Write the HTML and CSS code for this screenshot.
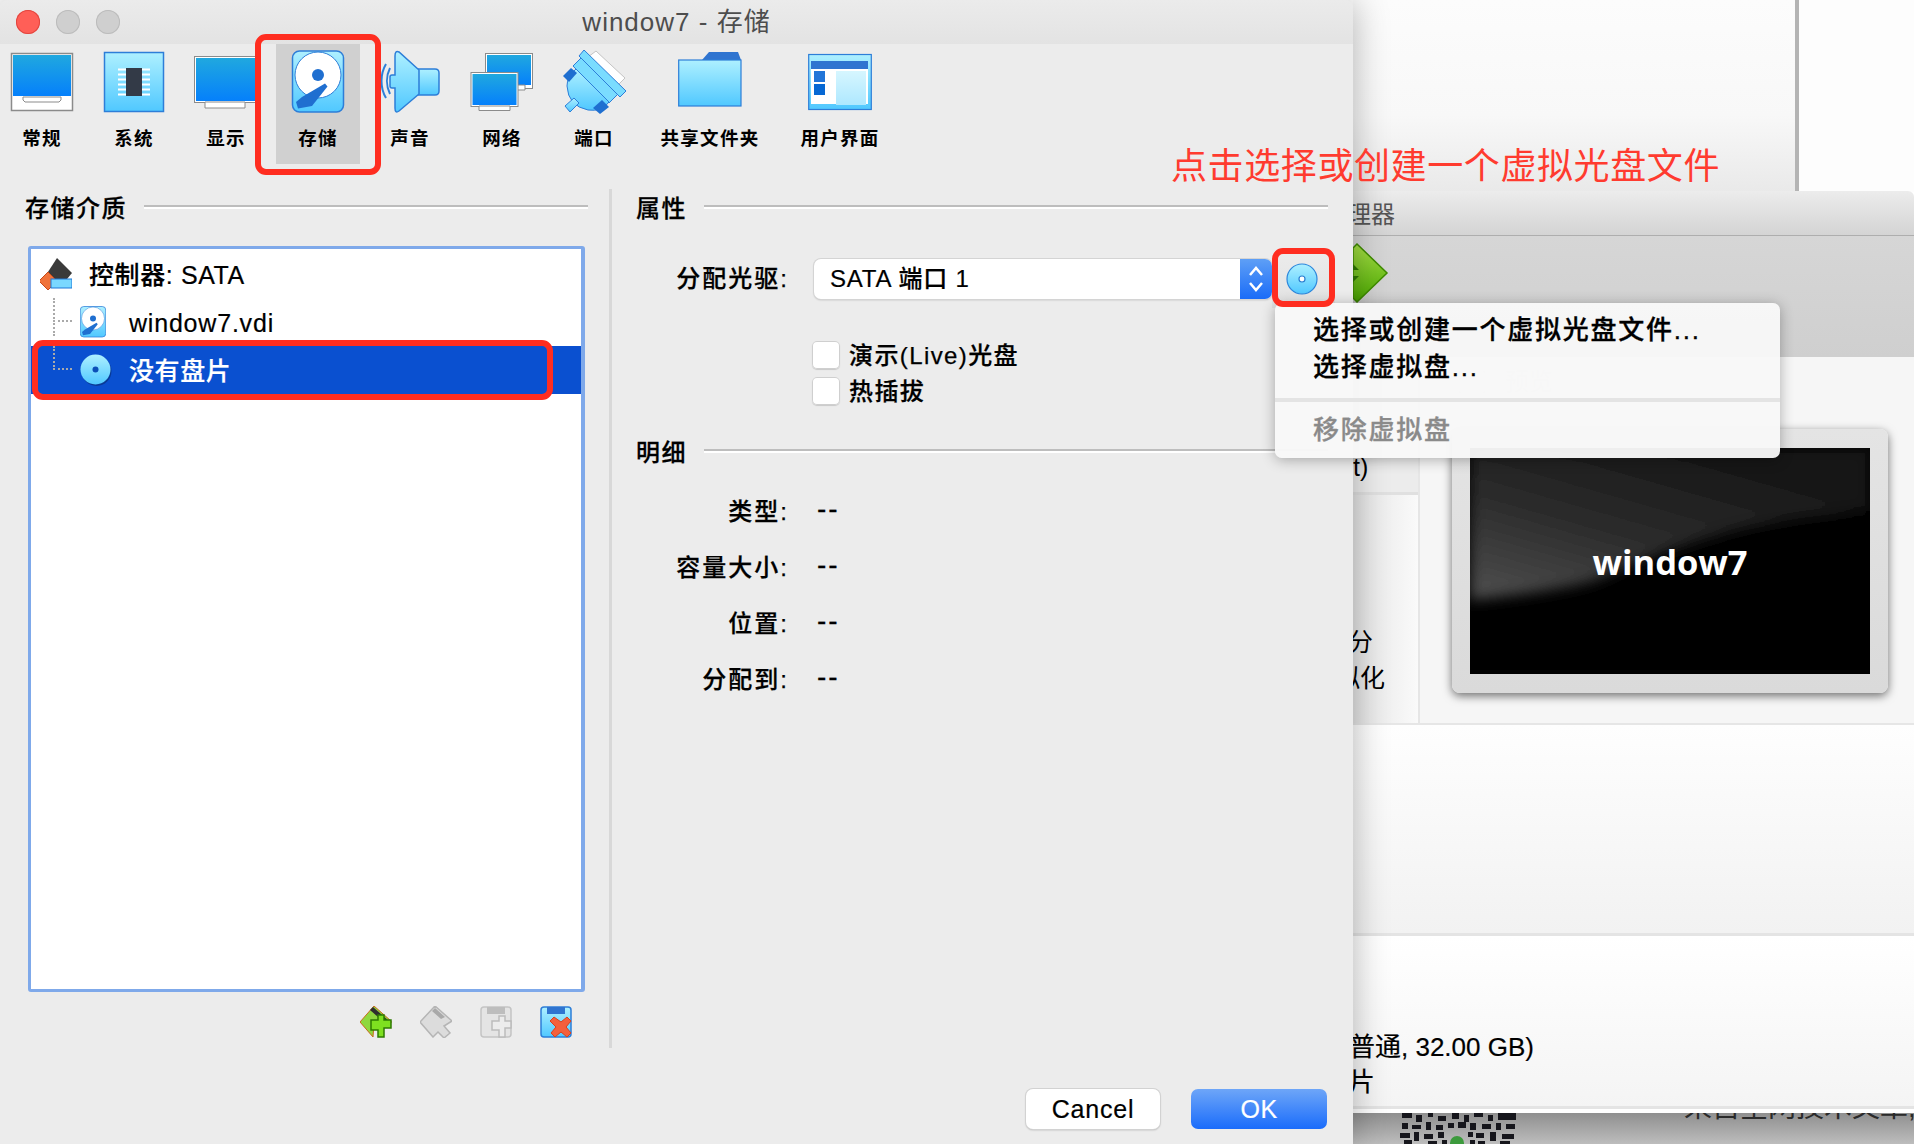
FILE: index.html
```html
<!DOCTYPE html>
<html lang="zh">
<head>
<meta charset="utf-8">
<title>window7 - 存储</title>
<link rel="stylesheet" href="styles.css">
</head>
<body>
<svg class="defs" aria-hidden="true">
  <defs>
    <linearGradient id="screen" x1="0" y1="0" x2="0" y2="1"><stop offset="0" stop-color="#20a8df"/><stop offset="1" stop-color="#0580fb"/></linearGradient>
    <linearGradient id="tile" x1="0" y1="0" x2="0" y2="1"><stop offset="0" stop-color="#aef0ff"/><stop offset="1" stop-color="#50c8ff"/></linearGradient>
    <linearGradient id="pane" x1="0" y1="0" x2="0" y2="1"><stop offset="0" stop-color="#d6f6ff"/><stop offset="1" stop-color="#aee8ff"/></linearGradient>
    <linearGradient id="green" x1="0" y1="0" x2="0" y2="1"><stop offset="0" stop-color="#a6e045"/><stop offset="1" stop-color="#4aa800"/></linearGradient>
    <linearGradient id="glow" x1="0" y1="1" x2="0.75" y2="0"><stop offset="0" stop-color="#505050"/><stop offset="0.45" stop-color="#2c2c2c"/><stop offset="1" stop-color="#121212"/></linearGradient>
    <filter id="soft"><feGaussianBlur stdDeviation="7"/></filter>
    <filter id="qrblur"><feGaussianBlur stdDeviation="0.7"/></filter>
    <symbol id="disk" viewBox="0 0 64 64">
      <rect x="6.500" y="1" width="51" height="61" rx="7" fill="url(#tile)" stroke="#2d7ed8" stroke-width="1.500"/>
      <circle cx="32" cy="25" r="23" fill="#fff" stroke="#2d7ed8" stroke-width="1"/>
      <circle cx="32" cy="25" r="6" fill="#1f6fd0"/>
      <path d="M39 33.500L41.500 36.500L26 56L12 58.500L10 52L16 47Z" fill="#1f6fd0"/>
    </symbol>
  </defs>
</svg>

<div class="page-behind">
  <div class="page-text">来自全网技术文章,</div>
  <svg class="qr" viewBox="0 0 118 31" width="118" height="31">
    <g filter="url(#qrblur)" fill="#15181a">
      <path d="M2 0h10v5H2zM16 2h6v7h-6zM28 0h5v4h-5zM38 3h8v5h-8zM52 0h7v6h-7zM64 2h5v7h-5zM74 0h9v4h-9zM88 2h5v6h-5zM98 0h18v7H98zM2 10h6v6H2zM12 12h9v4h-9zM26 9h5v8h-5zM36 12h7v5h-7zM48 10h6v5h-6zM58 9h8v6h-8zM70 10h6v7h-6zM82 11h9v5h-9zM96 10h5v7h-5zM106 11h9v5h-9zM0 20h10v5H0zM14 19h5v9h-5zM24 21h9v5h-9zM38 19h6v6h-6zM68 19h5v5h-5zM76 20h8v5h-8zM90 19h6v9h-6zM102 21h12v5h-12zM4 27h8v4H4zM28 28h9v3h-9zM42 27h5v4h-5zM70 27h5v4h-5zM78 28h7v3h-7zM100 28h10v3h-10z"/>
    </g>
    <circle cx="57" cy="30" r="7" fill="#3c9a3c"/>
  </svg>
</div>

<div class="window-top">
  <div class="window-top-main"></div>
  <div class="window-top-side"></div>
</div>

<section class="manager">
  <header class="manager-title"><span>理器</span></header>
  <div class="manager-tools">
    <svg class="start-arrow" viewBox="0 0 36 60" width="36" height="60">
      <path d="M4 1L34 30L4 59L0 55V5Z" fill="url(#green)" stroke="#3f8c00" stroke-width="1.500"/>
      <path d="M0 21L6 27L0 27ZM0 33L6 33L0 39Z" fill="#2f7a00"/>
    </svg>
  </div>
  <div class="manager-summary">
    <div class="summary-side">
      <div class="side-cell side-cell-top"><span>t)</span></div>
      <div class="side-cell side-cell-bottom">
        <span class="side-line side-line-a">分</span>
        <span class="side-line side-line-b">拟化</span>
      </div>
    </div>
    <div class="preview">
      <div class="preview-head">
        <svg viewBox="0 0 28 28" width="28" height="28"><rect x="1" y="3" width="26" height="22" rx="2" fill="none" stroke="#e6e6e6" stroke-width="1.500"/></svg>
        <span>预览</span>
      </div>
      <div class="preview-frame">
        <div class="preview-screen">
          <svg class="preview-glow" viewBox="0 0 400 226" preserveAspectRatio="none">
            <path d="M0 0H400V62C300 72 236 82 126 132C90 142 40 148 0 152Z" fill="url(#glow)" filter="url(#soft)"/>
          </svg>
          <span class="preview-name">window7</span>
        </div>
      </div>
    </div>
  </div>
  <div class="manager-band"></div>
  <div class="manager-storage">
    <div class="storage-line">普通, 32.00 GB)</div>
    <div class="storage-line">片</div>
  </div>
</section>

<main class="settings">
  <header class="titlebar">
    <div class="lights">
      <span class="light light-close"></span>
      <span class="light"></span>
      <span class="light"></span>
    </div>
    <h1 class="title">window7 - 存储</h1>
  </header>

  <nav class="toolbar">
    <div class="tool">
      <svg viewBox="0 0 64 64" width="64" height="64">
        <rect x="1.500" y="3.500" width="61" height="57" fill="#fff" stroke="#8b8b8b" stroke-width="1.500"/>
        <rect x="3" y="5" width="58" height="41" fill="url(#screen)"/>
        <path d="M13 47H51V50L49 52H15L13 50Z" fill="#fff" stroke="#8b8b8b" stroke-width="1"/>
      </svg>
      <span>常规</span>
    </div>
    <div class="tool">
      <svg viewBox="0 0 64 64" width="64" height="64">
        <rect x="2.500" y="2.500" width="59" height="59" fill="url(#tile)" stroke="#2d7ed8" stroke-width="1.500"/>
        <path d="M16 19.500H48M16 24.500H48M16 29.500H48M16 34.500H48M16 39.500H48M16 44.500H48" stroke="#fff" stroke-width="2"/>
        <rect x="24" y="18" width="16" height="28" fill="#333a47"/>
      </svg>
      <span>系统</span>
    </div>
    <div class="tool">
      <svg viewBox="0 0 64 64" width="64" height="64">
        <rect x="0.500" y="6.500" width="63" height="46" fill="#fff" stroke="#8b8b8b" stroke-width="1"/>
        <rect x="2" y="8" width="60" height="43" fill="url(#screen)"/>
        <path d="M11 52H51V58H11Z" fill="#fff" stroke="#8b8b8b" stroke-width="1"/>
      </svg>
      <span>显示</span>
    </div>
    <div class="tool tool-active">
      <svg viewBox="0 0 64 64" width="64" height="64"><use href="#disk"/></svg>
      <span>存储</span>
    </div>
    <div class="tool">
      <svg viewBox="0 0 64 64" width="64" height="64">
        <path d="M8 14C2 24 2 38 8 48M12 18C8 26 8 36 12 44" fill="none" stroke="#2d7ed8" stroke-width="2"/>
        <path d="M40 19H57Q61 19 61 23V41Q61 45 57 45H40Z" fill="url(#tile)" stroke="#2d7ed8" stroke-width="1.500"/>
        <path d="M14 25H17V6Q17 0 21 2L41 20V44L21 61Q17 64 17 58V38H14Q12 38 12 36V27Q12 25 14 25Z" fill="url(#tile)" stroke="#2d7ed8" stroke-width="1.500"/>
      </svg>
      <span>声音</span>
    </div>
    <div class="tool">
      <svg viewBox="0 0 64 64" width="64" height="64">
        <rect x="15.500" y="3.500" width="47" height="35" fill="#fff" stroke="#8b8b8b" stroke-width="1"/>
        <rect x="17" y="5" width="44" height="30" fill="url(#screen)"/>
        <path d="M46 35H55V40H46Z" fill="#fff" stroke="#8b8b8b" stroke-width="1"/>
        <rect x="1" y="22.500" width="47" height="34" fill="#fff" stroke="#8b8b8b" stroke-width="1"/>
        <rect x="2.500" y="24" width="44" height="31" fill="url(#screen)"/>
        <path d="M9 56H40V60.500H9Z" fill="#fff" stroke="#8b8b8b" stroke-width="1"/>
      </svg>
      <span>网络</span>
    </div>
    <div class="tool">
      <svg viewBox="0 0 64 64" width="64" height="64">
        <path d="M26 7L34 1L63 28L55 36Z" fill="#fff" stroke="#c4c4c4" stroke-width="1"/>
        <path d="M11 16L19 8L49 38L56 44L47 53Z" fill="#7adcff" stroke="#2d7ed8" stroke-width="1"/>
        <path d="M14 19L47 52Q40 62 26 60Q6 56 5 36Q5 26 14 19Z" fill="url(#tile)" stroke="#2d7ed8" stroke-width="1"/>
        <path d="M1 26L9 18L15 23L7 32Z" fill="#1f6fd0"/>
        <path d="M31 58L40 50L47 57L38 64Z" fill="#1f6fd0"/>
        <path d="M22 0L64 41L58 47L17 6Z" fill="#7adcff" stroke="#2d7ed8" stroke-width="1"/>
        <path d="M3 56L12 48L17 53L8 62Z" fill="url(#tile)" stroke="#2d7ed8" stroke-width="1"/>
      </svg>
      <span>端口</span>
    </div>
    <div class="tool tool-wide">
      <svg viewBox="0 0 64 64" width="64" height="64">
        <path d="M24 10L31 2H60L63 10Z" fill="#2f74d0"/>
        <rect x="0.700" y="10" width="62.300" height="46" fill="url(#tile)" stroke="#2d7ed8" stroke-width="1.200"/>
      </svg>
      <span>共享文件夹</span>
    </div>
    <div class="tool tool-mid">
      <svg viewBox="0 0 64 64" width="64" height="64">
        <rect x="0.700" y="4.500" width="62.600" height="55" fill="url(#tile)" stroke="#2d7ed8" stroke-width="1.200"/>
        <rect x="3" y="11" width="57" height="43" fill="#fff"/>
        <rect x="3" y="11" width="57" height="8" fill="#2f74d0"/>
        <rect x="6" y="21" width="11" height="11" fill="#2175d8"/>
        <rect x="6" y="34" width="11" height="11" fill="#0668d4"/>
        <rect x="28" y="21" width="30" height="34" fill="url(#pane)"/>
      </svg>
      <span>用户界面</span>
    </div>
  </nav>

  <div class="panes">
    <section class="pane pane-left">
      <div class="head"><h2>存储介质</h2><span class="rule"></span></div>
      <div class="tree">
        <div class="row row-root">
          <svg class="row-icon" viewBox="0 0 32 32" width="32" height="32">
            <path d="M17 0L32 15L27 21H9L6 17Z" fill="#3a3a3a"/>
            <path d="M8 14L17 23L8 32L-1 23Z" fill="#f0733a" stroke="#c84a18" stroke-width="1"/>
            <rect x="11" y="21" width="21" height="9" fill="#7ad8ff" stroke="#1f78d8" stroke-width="1"/>
          </svg>
          <span class="row-text">控制器: SATA</span>
        </div>
        <div class="row row-child">
          <span class="branch branch-more"></span>
          <svg class="row-icon row-icon-narrow" viewBox="6 0 52 64" width="26" height="32"><use href="#disk" width="64" height="64"/></svg>
          <span class="row-text row-text-latin">window7.vdi</span>
        </div>
        <div class="row row-child row-selected">
          <span class="branch"></span>
          <svg class="row-icon" viewBox="0 0 32 32" width="32" height="32">
            <circle cx="16.500" cy="17" r="15" fill="#0a3a96"/>
            <circle cx="15.500" cy="15.500" r="15" fill="url(#tile)"/>
            <circle cx="15.500" cy="15.500" r="3" fill="#0b4fb8"/>
          </svg>
          <span class="row-text">没有盘片</span>
        </div>
      </div>
      <div class="tree-tools">
        <svg viewBox="0 0 32 32" width="32" height="32">
          <path d="M14 0L31 15V17H14L13 31L0 16Z" fill="#8ed83e" stroke="#c86a1c" stroke-width="1"/>
          <path d="M13 1L30 16L26 18L10 4Z" fill="#2e2e2e"/>
          <path d="M11 14H18V9H24V14H31V22H24V31H18V24H11Z" fill="#7ee020" stroke="#2e7a00" stroke-width="1.500"/>
        </svg>
        <svg viewBox="0 0 32 32" width="32" height="32">
          <path d="M15 0L32 15L24 20L30 27L24 32L18 26L13 31L0 16Z" fill="#dcdcdc" stroke="#b5b5b5" stroke-width="1.500"/>
          <path d="M15 2L25 11L21 13L12 5Z" fill="#a9a9a9"/>
        </svg>
        <svg viewBox="0 0 32 32" width="32" height="32">
          <rect x="1" y="1" width="30" height="30" rx="3" fill="#e4e4e4" stroke="#c4c4c4" stroke-width="1.500"/>
          <rect x="7" y="1" width="18" height="7" fill="#bdbdbd"/>
          <path d="M12 15H19V10H25V15H31V22H25V31H19V24H12Z" fill="#ececec" stroke="#bcbcbc" stroke-width="1.500"/>
        </svg>
        <svg viewBox="0 0 32 32" width="32" height="32">
          <rect x="1" y="1" width="30" height="30" rx="3" fill="url(#tile)" stroke="#2d7ed8" stroke-width="1.500"/>
          <rect x="7" y="1" width="18" height="7" fill="#2f74d0"/>
          <path d="M14 11L21 16L27 11L31 15L26 21L31 27L27 31L21 26L15 31L11 27L16 21L10 15Z" fill="#f4603c" stroke="#d8401c" stroke-width="1"/>
        </svg>
      </div>
    </section>

    <section class="pane pane-right">
      <div class="head"><h2>属性</h2><span class="rule"></span></div>
      <div class="field">
        <label class="field-label">分配光驱:</label>
        <div class="drive">
          <div class="combo">
            <span class="combo-value">SATA 端口 1</span>
            <span class="combo-stepper">
              <svg viewBox="0 0 16 30" width="16" height="30"><path d="M2 11L8 4L14 11M2 19L8 26L14 19" fill="none" stroke="#fff" stroke-width="2.500"/></svg>
            </span>
          </div>
          <div class="disc-button">
            <svg viewBox="0 0 32 32" width="32" height="32">
              <circle cx="16" cy="16" r="15" fill="url(#tile)" stroke="#2b86dc" stroke-width="1.200"/>
              <circle cx="16" cy="16" r="3" fill="#fff" stroke="#2b7ed0" stroke-width="1.200"/>
            </svg>
          </div>
        </div>
      </div>
      <div class="checks">
        <div class="check"><span class="box"></span><span class="check-text">演示(Live)光盘</span></div>
        <div class="check"><span class="box"></span><span class="check-text">热插拔</span></div>
      </div>
      <div class="head head-details"><h2>明细</h2><span class="rule"></span></div>
      <dl class="details">
        <dt>类型:</dt><dd>--</dd>
        <dt>容量大小:</dt><dd>--</dd>
        <dt>位置:</dt><dd>--</dd>
        <dt>分配到:</dt><dd>--</dd>
      </dl>
    </section>
  </div>

  <footer class="footer">
    <button class="btn btn-cancel">Cancel</button>
    <button class="btn btn-ok">OK</button>
  </footer>
</main>

<div class="menu">
  <div class="menu-item">选择或创建一个虚拟光盘文件...</div>
  <div class="menu-item">选择虚拟盘...</div>
  <div class="menu-sep"></div>
  <div class="menu-item menu-item-off">移除虚拟盘</div>
</div>

<div class="callout callout-tool"></div>
<div class="callout callout-row"></div>
<div class="callout callout-disc"></div>
<div class="note">点击选择或创建一个虚拟光盘文件</div>
</body>
</html>
```

FILE: styles.css
```css
* { box-sizing: border-box; }

html, body { margin: 0; padding: 0; }

body {
  position: relative;
  width: 1914px;
  height: 1144px;
  overflow: hidden;
  background: #fff;
  color: #000;
  font-family: "Liberation Sans", "Noto Sans CJK SC", sans-serif;
}

.defs { position: absolute; width: 0; height: 0; }

svg { display: block; }

/* ---------- windows behind ---------- */
.page-behind {
  position: absolute;
  left: 1353px;
  top: 1113px;
  width: 561px;
  height: 31px;
  overflow: hidden;
  background: linear-gradient(180deg, #8f8f8f 0, #bdbdbd 100%);
}
.page-text {
  position: absolute;
  left: 331px;
  top: -20px;
  width: 240px;
  font-size: 28px;
  line-height: 30px;
  white-space: nowrap;
  color: #2a2a2a;
}
.qr { position: absolute; left: 47px; top: 0; }

.window-top {
  position: absolute;
  left: 1353px;
  top: 0;
  width: 561px;
  height: 192px;
  display: flex;
}
.window-top-main {
  width: 446px;
  border-right: 4px solid #b4b4b4;
  background: linear-gradient(180deg, #fcfcfc 0, #f8f8f8 60%, #e9e9e9 100%);
}
.window-top-side { flex: 1; background: #fdfdfd; }

.manager {
  position: absolute;
  left: 1353px;
  top: 191px;
  width: 561px;
  height: 922px;
  display: flex;
  flex-direction: column;
  background: #fff;
  border-top-right-radius: 6px;
  overflow: hidden;
}
.manager-title {
  height: 45px;
  flex: none;
  padding-top: 9px;
  font-size: 24px;
  line-height: 30px;
  color: #555;
  background: linear-gradient(180deg, #ececec 0, #d4d4d4 100%);
  border-bottom: 1px solid #aeaeae;
}
.manager-title span { display: block; margin-left: -6px; white-space: nowrap; }
.manager-tools {
  height: 121px;
  flex: none;
  padding-top: 7px;
  background: linear-gradient(180deg, #d6d6d6 0, #cfcfcf 100%);
}
.manager-summary {
  height: 368px;
  flex: none;
  display: flex;
  background: #f6f6f6;
  border-bottom: 2px solid #e6e6e6;
}
.summary-side {
  width: 67px;
  flex: none;
  display: flex;
  flex-direction: column;
  border-right: 2px solid #e6e6e6;
}
.side-cell { font-size: 25px; line-height: 36px; }
.side-cell-top {
  height: 138px;
  padding-top: 92px;
  border-bottom: 3px solid #e0e0e0;
  background: #ececec;
}
.side-cell-bottom {
  flex: 1;
  padding-top: 129px;
  display: flex;
  flex-direction: column;
  background: linear-gradient(90deg, #e4e4e4 0, #fafafa 100%);
}
.side-line { white-space: nowrap; }
.side-line-a { margin-left: -5px; }
.side-line-b { margin-left: -18px; }
.preview { flex: 1; padding: 0 26px 0 32px; position: relative; }
.preview-head {
  height: 72px;
  display: flex;
  align-items: flex-start;
  gap: 19px;
  padding-top: 11px;
  padding-left: 6px;
  font-size: 24px;
  line-height: 28px;
  color: #e0e0e0;
}
.preview-frame {
  height: 264px;
  padding: 19px 18px;
  background: linear-gradient(180deg, #e4e4e4 0, #dadada 100%);
  border-radius: 8px;
  box-shadow: 0 3px 10px rgba(0, 0, 0, 0.55);
}
.preview-screen {
  position: relative;
  height: 226px;
  background: #000;
  overflow: hidden;
  display: flex;
  align-items: center;
  justify-content: center;
}
.preview-glow { position: absolute; left: 0; top: 0; width: 100%; height: 100%; }
.preview-name {
  position: relative;
  font-family: "Open Sans", "Noto Sans", sans-serif;
  font-weight: 700;
  font-size: 34.500px;
  color: #fff;
}
.manager-band {
  height: 211px;
  flex: none;
  background: linear-gradient(180deg, #fefefe 0, #f2f2f2 100%);
  border-bottom: 3px solid #e4e4e4;
}
.manager-storage {
  flex: 1;
  padding-top: 94px;
  font-size: 26px;
  line-height: 35px;
  background: linear-gradient(180deg, #fff 0, #f4f4f4 100%);
  border-bottom: 4px solid #fff;
  box-shadow: inset 0 -3px 0 #e4e4e4;
}
.storage-line { margin-left: -4px; white-space: nowrap; -webkit-text-stroke: 0.2px #000; }

/* ---------- settings window ---------- */
.settings {
  position: absolute;
  left: 0;
  top: 0;
  width: 1353px;
  height: 1144px;
  display: flex;
  flex-direction: column;
  background: #ececec;
  border-top-left-radius: 8px;
  border-top-right-radius: 8px;
  box-shadow: 0 0 36px rgba(0, 0, 0, 0.3);
}
.titlebar {
  height: 44px;
  flex: none;
  display: grid;
  grid-template-columns: 1fr auto 1fr;
  align-items: center;
  background: linear-gradient(180deg, #ebebeb 0, #e3e3e3 100%);
  border-top-left-radius: 8px;
  border-top-right-radius: 8px;
}
.lights { display: flex; gap: 16px; padding-left: 16px; }
.light {
  width: 24px;
  height: 24px;
  border-radius: 50%;
  background: #cfcfcf;
  box-shadow: inset 0 0 0 1px #bcbcbc;
}
.light-close { background: #ff5f57; box-shadow: inset 0 0 0 1px #e2463f; }
.title {
  margin: 0;
  font-size: 26px;
  font-weight: 400;
  line-height: 30px;
  letter-spacing: 1px;
  color: #4d4d4d;
}
.toolbar {
  height: 120px;
  flex: none;
  display: flex;
  gap: 8px;
}
.tool {
  width: 84px;
  flex: none;
  padding-top: 6px;
  display: flex;
  flex-direction: column;
  align-items: center;
  font-size: 18.500px;
  font-weight: 700;
  line-height: 24px;
  letter-spacing: 1.300px;
}
.tool span { margin-top: 13px; }
.tool-active { background: #d0d0d0; }
.tool-wide { width: 132px; }
.tool-mid { width: 112px; }

.panes {
  height: 859px;
  flex: none;
  margin-top: 25px;
  display: flex;
}
.pane-left {
  width: 612px;
  flex: none;
  padding: 0 21px 0 25px;
  border-right: 3px solid #d8d8d8;
}
.pane-right { flex: 1; min-width: 0; padding: 0 25px 0 24px; }

.head { height: 40px; display: flex; align-items: center; gap: 17px; }
.head h2 {
  margin: 0;
  font-size: 24px;
  font-weight: 500;
  line-height: 40px;
  letter-spacing: 1.500px;
  white-space: nowrap;
  -webkit-text-stroke: 0.25px #000;
}
.rule {
  flex: 1;
  height: 4px;
  margin-top: -4px;
  background: linear-gradient(180deg, #bdbdbd 0, #bdbdbd 50%, #fff 50%, #fff 100%);
}

.tree {
  width: 557px;
  height: 746px;
  margin: 17px 0 0 3px;
  padding-top: 1px;
  background: #fff;
  border: 3px solid #7fa9ea;
  border-right-width: 4px;
  border-radius: 3px;
  font-size: 25px;
  font-weight: 500;
  letter-spacing: 0.6px;
}
.row {
  height: 48px;
  display: flex;
  align-items: center;
  gap: 17px;
  white-space: nowrap;
}
.row-text { margin-top: -2px; -webkit-text-stroke: 0.2px currentColor; }
.row-text-latin { margin-top: 2px; letter-spacing: 0.8px; }
.row-root { padding-left: 9px; }
.row-child { padding-left: 22px; }
.row-icon { flex: none; }
.row-icon-narrow { margin-right: 6px; }
.branch {
  position: relative;
  width: 19px;
  height: 24px;
  margin-right: -9px;
  align-self: flex-start;
  flex: none;
  border-left: 2px dotted #aaa;
  border-bottom: 2px dotted #aaa;
}
.branch-more::after {
  content: "";
  position: absolute;
  left: -2px;
  top: 100%;
  height: 16px;
  border-left: 2px dotted #aaa;
}
.row-selected { background: #0a50d0; color: #fff; }

.tree-tools {
  display: flex;
  justify-content: flex-end;
  gap: 28px;
  margin: 14px 16px 0 0;
}

.field {
  display: grid;
  grid-template-columns: 151px minmax(0, 1fr);
  column-gap: 27px;
  align-items: center;
  margin-top: 20px;
}
.field-label, .details dt {
  font-size: 24px;
  font-weight: 500;
  letter-spacing: 2px;
  text-align: right;
  white-space: nowrap;
  margin: 0 -2px 0 0;
  padding-bottom: 4px;
  -webkit-text-stroke: 0.25px #000;
}
.drive { display: flex; align-items: center; }
.combo {
  width: 458px;
  height: 40px;
  flex: none;
  display: flex;
  align-items: center;
  justify-content: space-between;
  padding-left: 16px;
  background: #fff;
  border-radius: 7px;
  box-shadow: 0 0 0 1px #d4d4d4, 0 1px 2px rgba(0, 0, 0, 0.25);
  overflow: hidden;
  font-size: 24px;
  font-weight: 500;
  letter-spacing: 0.8px;
}
.combo-value { padding-bottom: 4px; -webkit-text-stroke: 0.2px #000; }
.combo-stepper {
  width: 32px;
  height: 40px;
  flex: none;
  display: flex;
  align-items: center;
  justify-content: center;
  background: linear-gradient(180deg, #5e9ff6 0, #1a6cf8 100%);
}
.disc-button {
  width: 63px;
  height: 59px;
  flex: none;
  display: flex;
  align-items: center;
  justify-content: center;
  padding-right: 3px;
  background: linear-gradient(180deg, #ececec 0, #e2e2e2 100%);
}

.checks { margin: 33px 0 0 176px; display: flex; flex-direction: column; gap: 8px; }
.check {
  height: 28px;
  display: flex;
  align-items: center;
  gap: 9px;
  font-size: 24px;
  font-weight: 500;
  letter-spacing: 1.400px;
  white-space: nowrap;
  -webkit-text-stroke: 0.25px #000;
}
.check-text { padding-bottom: 4px; }
.box {
  width: 28px;
  height: 28px;
  flex: none;
  background: #fff;
  border-radius: 5px;
  box-shadow: inset 0 0 0 1px #cfcfcf, 0 1px 1px rgba(0, 0, 0, 0.15);
}
.head-details { margin-top: 28px; }
.details {
  display: grid;
  grid-template-columns: 151px 1fr;
  grid-auto-rows: 56px;
  column-gap: 30px;
  align-items: center;
  margin: 10px 0 0;
}
.details dd {
  margin: 0;
  padding-bottom: 4px;
  font-size: 28px;
  font-weight: 500;
  letter-spacing: 2px;
  -webkit-text-stroke: 0.25px #000;
}

.footer {
  flex: 1;
  display: flex;
  justify-content: flex-end;
  align-items: flex-start;
  gap: 31px;
  padding: 41px 26px 0 0;
}
.btn {
  height: 40px;
  padding: 0;
  border: 0;
  border-radius: 7px;
  font-family: inherit;
  font-size: 25px;
  letter-spacing: 0.4px;
  -webkit-text-stroke: 0.2px currentColor;
}
.btn-cancel {
  width: 134px;
  background: #fff;
  color: #000;
  letter-spacing: 0.8px;
  box-shadow: 0 0 0 1px #d2d2d2, 0 1px 2px rgba(0, 0, 0, 0.3);
}
.btn-ok {
  width: 136px;
  color: #fff;
  background: linear-gradient(180deg, #6ea6f8 0, #1a6cfb 100%);
}

/* ---------- overlays ---------- */
.menu {
  position: absolute;
  left: 1275px;
  top: 303px;
  width: 505px;
  height: 155px;
  padding: 9px 0 0 38px;
  background: rgba(248, 248, 248, 0.96);
  border-radius: 7px;
  box-shadow: 0 2px 14px rgba(0, 0, 0, 0.3);
  font-size: 26px;
  font-weight: 500;
  letter-spacing: 1.750px;
  -webkit-text-stroke: 0.3px currentColor;
}
.menu-item { height: 37px; line-height: 37px; white-space: nowrap; }
.menu-sep { height: 4px; margin: 12px 0 10px -38px; background: #e4e4e4; }
.menu-item-off { color: #8a8a8a; }

.callout {
  position: absolute;
  border: 6px solid #ff2d20;
  border-radius: 11px;
}
.callout-tool { left: 255px; top: 34px; width: 126px; height: 141px; }
.callout-row { left: 32px; top: 340px; width: 521px; height: 60px; }
.callout-disc { left: 1272px; top: 248px; width: 63px; height: 59px; }

.note {
  position: absolute;
  left: 1171px;
  top: 144px;
  font-size: 36px;
  line-height: 46px;
  letter-spacing: 0.6px;
  color: #ff3b2f;
  white-space: nowrap;
}
```
